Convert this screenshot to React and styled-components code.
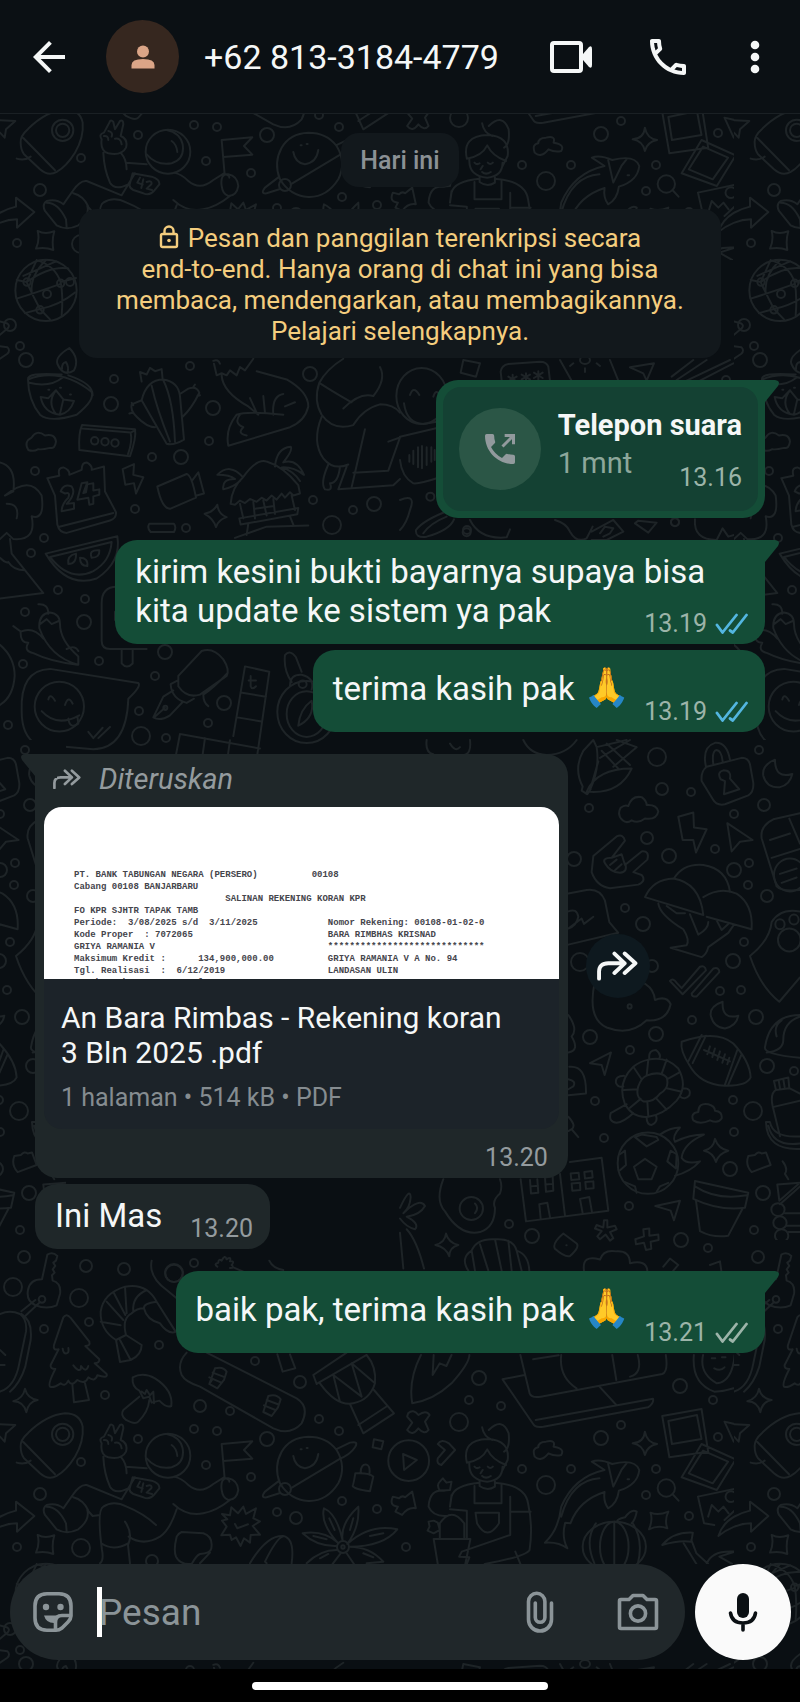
import React, { useState } from "react";
import styled, { createGlobalStyle } from "styled-components";
import { MdArrowBack, MdOutlineCall } from "react-icons/md";

const GlobalStyle = createGlobalStyle`
  * {
    box-sizing: border-box;
  }

  body {
    margin: 0;
    background: #000;
    color: #f5f7f7;
    font-family: Roboto, "Noto Sans", sans-serif;
  }

  button,
  input {
    font: inherit;
    color: inherit;
    background: none;
    border: none;
    padding: 0;
  }
`;

const Screen = styled.div`
  position: relative;
  display: flex;
  flex-direction: column;
  min-height: 100vh;
  overflow: hidden;
  background: #0a0f13;
`;

const WallpaperSvg = styled.svg`
  position: absolute;
  top: 0;
  left: 0;
  width: 100%;
  height: 100%;
  fill: none;
  stroke: #1e2427;
  stroke-width: 2;
  stroke-linecap: round;
  stroke-linejoin: round;

  path,
  ellipse {
    vector-effect: non-scaling-stroke;
  }
`;

const Header = styled.header`
  position: relative;
  display: flex;
  align-items: center;
  height: 114px;
  padding: 0 31px 0 25px;
  background: #0b1014;
  border-bottom: 1px solid #1a2024;
`;

const IconButton = styled.button`
  display: flex;
  align-items: center;
  justify-content: center;
  flex: none;
  width: ${(props) => (props.$narrow ? "28px" : "48px")};
  height: 48px;
  cursor: pointer;
`;

const Avatar = styled.span`
  display: flex;
  align-items: center;
  justify-content: center;
  flex: none;
  width: 73px;
  height: 73px;
  margin-left: 33px;
  border-radius: 50%;
  background: #36271f;
`;

const ContactName = styled.h1`
  flex: 1;
  margin: 0 0 0 25px;
  font-size: 34px;
  font-weight: 400;
  white-space: nowrap;
`;

const HeaderActions = styled.div`
  display: flex;
  gap: 49px;
`;

const Chat = styled.main`
  position: relative;
  flex: 1;
  display: flex;
  flex-direction: column;
  padding: 19px 35px;
`;

const DateChip = styled.time`
  align-self: center;
  padding: 14px 19px 12px;
  border-radius: 18px;
  background: #12181c;
  color: #8b9195;
  font-size: 25px;
  font-weight: 500;
  line-height: 28px;
`;

const Notice = styled.p`
  align-self: center;
  width: 88%;
  margin: 22px 0 0;
  padding: 14px 32px 11px;
  border-radius: 18px;
  background: #12181c;
  color: #f4cd7e;
  font-size: 26px;
  line-height: 31px;
  text-align: center;

  svg {
    margin-right: 9px;
    vertical-align: -2px;
  }

  a {
    color: inherit;
    text-decoration: none;
  }
`;

const NoBreak = styled.span`
  white-space: nowrap;
`;

const Row = styled.div`
  display: flex;
  align-items: center;
  gap: 18px;
  justify-content: ${(props) => (props.$sent ? "flex-end" : "flex-start")};
  margin-top: ${(props) => (props.$grouped ? "6px" : "22px")};
`;

const Bubble = styled.article`
  position: relative;
  max-width: 89%;
  border-radius: 22px;
  background: ${(props) => (props.$sent ? "#144d37" : "#1f2729")};

  &::before {
    content: "";
    display: ${(props) => (props.$tail ? "block" : "none")};
    position: absolute;
    top: 0;
    ${(props) => (props.$sent ? "right: -15px;" : "left: -15px; transform: scaleX(-1);")}
    width: 37px;
    height: 24px;
    background: inherit;
    clip-path: path("M0 0 H32 Q38 1 35 6 L22 22 V24 H0 Z");
  }
`;

const TextBubble = styled(Bubble)`
  padding: 12px 17px 6px 20px;
  font-size: 33px;
  line-height: 39px;
`;

const Emoji = styled.span`
  display: inline-block;
  height: 56px;
  font-family: "Noto Color Emoji", sans-serif;
  font-size: 38px;
  line-height: 50px;
`;

const Meta = styled.span`
  position: relative;
  display: flex;
  align-items: center;
  gap: 8px;
  color: ${(props) => (props.$sent ? "#9cb4a9" : "#949b9e")};
  font-size: 25px;
  line-height: 28px;
`;

const FloatMeta = styled(Meta)`
  float: right;
  margin: ${(props) => (props.$tall ? "36px 0 0 14px" : "19px 0 0 28px")};
`;

const CallBubble = styled(Bubble)`
  padding: 7px;
`;

const CallCard = styled.div`
  position: relative;
  display: flex;
  align-items: center;
  gap: 17px;
  min-height: 124px;
  padding: 12px 16px;
  border-radius: 18px;
  background: #144133;
`;

const CallIcon = styled.span`
  display: flex;
  align-items: center;
  justify-content: center;
  width: 82px;
  height: 82px;
  border-radius: 50%;
  background: #2b5646;
`;

const CallTitle = styled.strong`
  display: block;
  font-size: 29px;
  font-weight: 700;
  line-height: 38px;
`;

const CallDetails = styled.div`
  display: flex;
  justify-content: space-between;
  align-items: flex-start;
  color: #8da79b;
  font-size: 29px;
  line-height: 38px;
`;

const CallTime = styled(Meta)`
  padding-top: 20px;
`;

const DocumentBubble = styled(Bubble)`
  width: 73%;
  padding: 9px 9px 6px;
`;

const Forwarded = styled.div`
  display: flex;
  align-items: center;
  gap: 18px;
  height: 44px;
  padding: 0 9px 12px;
  color: #949b9e;
  font-size: 29px;
  font-style: italic;
`;

const FileCard = styled.a`
  display: block;
  overflow: hidden;
  border-radius: 18px;
  background: #1c2329;
  color: #f5f7f7;
  text-decoration: none;
`;

const Statement = styled.pre`
  height: 172px;
  margin: 0;
  padding: 62px 0 0 30px;
  overflow: hidden;
  background: #fff;
  color: #45454c;
  font-family: "Liberation Mono", monospace;
  font-size: 9px;
  font-weight: 700;
  line-height: 12px;
`;

const FileInfo = styled.div`
  padding: 21px 40px 14px 17px;
  font-size: 30px;
  line-height: 35px;
`;

const FileMeta = styled.div`
  margin-top: 10px;
  color: #858c90;
  font-size: 25px;
`;

const DocumentTime = styled(Meta)`
  justify-content: flex-end;
  padding: 15px 11px 0;
`;

const ForwardButton = styled(IconButton)`
  width: 64px;
  height: 64px;
  border-radius: 50%;
  background: #0e191f;
`;

const Composer = styled.form`
  position: relative;
  display: flex;
  align-items: center;
  gap: 10px;
  padding: 0 9px 9px 10px;
`;

const InputBar = styled.div`
  flex: 1;
  display: flex;
  align-items: center;
  min-width: 0;
  height: 96px;
  padding: 0 23px 0 19px;
  border-radius: 48px;
  background: #20272a;
  color: #8b9498;
`;

const Caret = styled.span`
  flex: none;
  width: 5px;
  height: 50px;
  margin-left: 20px;
  background: #fff;
`;

const MessageInput = styled.input`
  flex: 1;
  min-width: 0;
  margin-left: -3px;
  font-size: 37px;
  outline: none;

  &::placeholder {
    color: #8b9498;
    opacity: 1;
  }
`;

const BarActions = styled.div`
  display: flex;
  gap: 50px;
`;

const MicButton = styled(IconButton)`
  width: 96px;
  height: 96px;
  border-radius: 50%;
  background: #fafafa;
  color: #0b1014;
`;

const NavBar = styled.footer`
  position: relative;
  display: flex;
  justify-content: center;
  align-items: center;
  height: 33px;
  background: #000;
`;

const NavHandle = styled.span`
  width: 37%;
  height: 8px;
  border-radius: 4px;
  background: #fff;
`;

function VideoIcon() {
  return (
    <svg width="44" height="36" viewBox="0 0 44 36" fill="none" aria-hidden="true">
      <rect x="3" y="4" width="29" height="28" rx="2" stroke="currentColor" strokeWidth="4" />
      <path d="M34 15 L40 8 Q43 6 43 10 V26 Q43 30 40 28 L34 21Z" fill="currentColor" />
    </svg>
  );
}

function MoreIcon() {
  return (
    <svg width="10" height="34" viewBox="0 0 10 34" fill="currentColor" aria-hidden="true">
      <circle cx="5" cy="5" r="4.3" />
      <circle cx="5" cy="17" r="4.3" />
      <circle cx="5" cy="29" r="4.3" />
    </svg>
  );
}

function PersonIcon() {
  return (
    <svg width="24" height="24" viewBox="0 0 24 24" fill="#dba587" aria-hidden="true">
      <circle cx="12" cy="6.5" r="6" />
      <path d="M.5 23.5V20Q.5 14 12 14T23.500 20V23.500Z" />
    </svg>
  );
}

function LockIcon() {
  return (
    <svg width="20" height="24" viewBox="0 0 20 24" fill="none" stroke="currentColor" strokeWidth="2.400" aria-hidden="true">
      <rect x="2" y="9" width="16" height="13" rx="1.500" />
      <path d="M5.500 9V6a4.500 4.500 0 0 1 9 0v3" />
      <circle cx="10" cy="15.500" r="1.800" fill="currentColor" stroke="none" />
    </svg>
  );
}

function OutgoingCallIcon() {
  return (
    <svg width="40" height="40" viewBox="0 0 24 24" fill="#929a9d" aria-hidden="true">
      <path d="M20 15.500c-1.250 0-2.450-.2-3.570-.57a1 1 0 0 0-1.020.24l-2.200 2.200a15.050 15.050 0 0 1-6.590-6.580l2.200-2.210c.28-.27.36-.66.25-1.010A11.360 11.360 0 0 1 8.500 4a1 1 0 0 0-1-1H4a1 1 0 0 0-1 1c0 9.390 7.610 17 17 17a1 1 0 0 0 1-1v-3.500a1 1 0 0 0-1-1z" />
      <path d="M13.500 10.500 20 4M14.800 3.900H20.100V9.200" fill="none" stroke="#929a9d" strokeWidth="1.800" />
    </svg>
  );
}

function Ticks({ read }) {
  return (
    <svg width="33" height="24" viewBox="0 0 33 24" fill="none" stroke={read ? "#53b6e0" : "#9cb4a9"} strokeWidth="2.800" strokeLinecap="round" strokeLinejoin="round" role="img" aria-label={read ? "Dibaca" : "Terkirim"}>
      <path d="M2 13 7.500 20.500 21.500 3M15 18.500 17.800 20.500 31.500 3" />
    </svg>
  );
}

function ForwardIcon({ width }) {
  return (
    <svg width={width} viewBox="0 0 40 29" fill="none" stroke="currentColor" strokeWidth="3.800" strokeLinecap="round" strokeLinejoin="round" aria-hidden="true">
      <path d="M2 27V20Q2 12 11 12H27M17 2.500 27 12 17 21.500M27 2.500 37.500 12 27 21.500" />
    </svg>
  );
}

function StickerIcon() {
  return (
    <svg width="42" height="42" viewBox="0 0 42 42" fill="none" stroke="currentColor" strokeWidth="3.600" strokeLinejoin="round" aria-hidden="true">
      <path d="M15 2.800H27Q39 3 39 15V25Q39 28 36 31L30 37Q27 39.200 24 39.200H15Q3 39 3 27V15Q3 3 15 2.800Z" />
      <path d="M38 24.500H30Q23.500 24.500 23.500 31V38" />
      <circle cx="14" cy="16" r="3.200" fill="currentColor" stroke="none" />
      <circle cx="28.500" cy="16" r="3.200" fill="currentColor" stroke="none" />
      <path d="M12 24.500H27Q22 27 22 32Q14 32 12 24.500Z" fill="currentColor" stroke="none" />
    </svg>
  );
}

function ClipIcon() {
  return (
    <svg width="28" height="42" viewBox="0 0 28 42" fill="none" stroke="currentColor" strokeWidth="3.600" strokeLinecap="round" aria-hidden="true">
      <path d="M25.500 12V28.500A11.500 11.500 0 0 1 2.500 28.500V10.500A8.200 8.200 0 0 1 18.900 10.500V26.500A4.800 4.800 0 0 1 9.300 26.500V12" />
    </svg>
  );
}

function CameraIcon() {
  return (
    <svg width="42" height="38" viewBox="0 0 42 38" fill="none" stroke="currentColor" strokeWidth="3.600" strokeLinejoin="round" aria-hidden="true">
      <path d="M4 6.500H12L16 2.500H26L30 6.500H38Q39.500 6.500 39.500 8V34Q39.500 35.500 38 35.500H4Q2.500 35.500 2.500 34V8Q2.500 6.500 4 6.500Z" />
      <circle cx="21" cy="20.500" r="7.600" />
    </svg>
  );
}

function MicIcon() {
  return (
    <svg width="30" height="42" viewBox="0 0 30 42" aria-hidden="true">
      <rect x="9" y="2" width="12" height="25" rx="6" fill="currentColor" />
      <path d="M2.500 22Q4 32 15 32T27.500 22M15 32V39" fill="none" stroke="currentColor" strokeWidth="3.600" strokeLinecap="round" />
    </svg>
  );
}

// x, y, r of the small rings scattered between the doodles
const rings = [
  [24, 1257, 6], [13, 1287, 9], [86, 1266, 6], [124, 1269, 6], [79, 1298, 9], [194, 1263, 4],
  [174, 1273, 9], [44, 1329, 4], [89, 1322, 4], [105, 1395, 4], [159, 1345, 4], [200, 1406, 6],
  [230, 1411, 4], [255, 1361, 4], [300, 1382, 6], [319, 1419, 4], [339, 1431, 4], [194, 1429, 4],
  [217, 1431, 4], [138, 1439, 4], [267, 1439, 7], [206, 1465, 4], [251, 1477, 4], [81, 1462, 4],
  [40, 1494, 6], [81, 1548, 9], [17, 1547, 4], [342, 1501, 4], [277, 1512, 4], [296, 1518, 6],
  [377, 1509, 4], [152, 1561, 6], [459, 1422, 9], [479, 1378, 7], [469, 1400, 4],
  [501, 1406, 4], [522, 1469, 4], [546, 1485, 9], [571, 1469, 4], [601, 1438, 7], [621, 1425, 4],
  [680, 1386, 7], [713, 1400, 4], [718, 1437, 4], [656, 1469, 4], [646, 1495, 4], [689, 1516, 4],
  [406, 1547, 4], [47, 294, 4], [70, 282, 4], [26, 360, 7],
  [10, 325, 6], [20, 346, 4], [114, 379, 4], [111, 404, 7], [213, 408, 7],
  [190, 366, 4], [209, 441, 4], [152, 457, 4], [181, 457, 7], [35, 471, 4], [135, 509, 4],
  [313, 500, 4], [353, 510, 4], [374, 504, 7], [332, 525, 9], [186, 528, 4], [44, 538, 4],
  [31, 553, 4], [58, 590, 4], [85, 599, 4], [25, 612, 4], [84, 622, 7], [23, 664, 4],
  [99, 661, 4], [165, 652, 7], [155, 676, 4], [224, 703, 7], [139, 711, 4], [141, 736, 9],
  [208, 723, 4], [166, 738, 4], [8, 725, 4], [310, 374, 7], [467, 530, 4], [675, 522, 4],
  [726, 380, 4], [657, 757, 9], [662, 789, 6], [691, 792, 4],
  [759, 750, 4], [764, 805, 6], [589, 808, 4], [734, 814, 4], [647, 838, 6], [574, 859, 7],
  [669, 856, 7], [715, 849, 4], [734, 870, 7], [749, 863, 4], [748, 885, 4], [767, 896, 6],
  [625, 908, 4], [643, 924, 7], [744, 942, 4], [733, 961, 7], [580, 962, 9], [652, 966, 6],
  [720, 991, 4], [741, 990, 4], [756, 1017, 7], [692, 1020, 4], [590, 1037, 7], [656, 1034, 7],
  [630, 1050, 4], [767, 1066, 7], [794, 1071, 4], [733, 1100, 4], [753, 1111, 9], [595, 1101, 4],
  [734, 1132, 4], [604, 1138, 4], [730, 1169, 7], [763, 1193, 7], [629, 1206, 4], [509, 1224, 4],
  [532, 1236, 7], [754, 1230, 4], [681, 1240, 7], [708, 1248, 4],
];

// The doodles of one tile. Each group keeps the scale it was drawn in.
function Doodles() {
  return (
    <g id="doodles" clipPath="url(#tile)">
      {rings.map(([x, y, r]) => (
        <ellipse key={`${x}-${y}`} cx={x} cy={y} rx={r} ry={r} />
      ))}

      <g transform="translate(0 1240) scale(.3333)">
        {/* rocket */}
        <path d="M62 620Q60 600 85 578Q140 525 195 520Q240 520 248 560Q252 605 225 650Q200 690 170 708Q145 722 120 700L72 655Q62 640 62 620ZM70 606 165 703M92 662Q75 675 50 668 58 698Q42 712 46 732 58 718 68 722 78 735 88 730 82 720 108 710 114 702 106 694M80 670Q92 680 74 694 66 706 72 714" />
        <ellipse cx="188" cy="583" rx="32" ry="32" />
        <ellipse cx="188" cy="583" rx="20" ry="20" />
        {/* key */}
        <path d="M142 44Q158 34 172 48L168 62 160 68 166 78 158 88 164 98 156 106 158 122Q185 130 180 162L170 196Q140 210 105 195 78 182 84 150 90 118 126 118ZM118 188 78 226M106 180 64 214M0 222Q30 208 60 222 82 238 78 275L58 370Q45 440 0 455M64 222Q98 240 92 300L76 380Q60 430 30 455M0 330 16 345M0 375H14" />
        <ellipse cx="126" cy="178" rx="10" ry="10" />
        {/* pine */}
        <path d="M190 232Q200 218 212 234L268 305Q272 318 256 318L298 358Q300 368 284 370L320 402Q325 416 292 406 285 428 265 412 255 435 232 420 215 442 205 422 195 442 182 430 160 445 150 440 143 432 166 387 150 387 152 375L176 328Q158 332 162 315ZM217 432 222 487 267 480 255 430M188 326Q190 342 200 340 208 338 205 324M220 376Q235 396 242 388L243 378Q258 400 265 378" />
        {/* shrimp */}
        <path d="M528 275Q505 285 480 250 440 240 432 205 410 205 395 220 365 235 378 285L425 315Q425 345 392 360L360 366 348 300Q300 270 302 215 310 160 375 140 440 128 470 185L525 272ZM302 245 362 256M320 185 370 240M342 160 376 225M375 140 380 220M440 150Q395 170 400 215M470 185Q430 190 432 205M348 300 378 285M360 300 392 360" />
        {/* mushroom */}
        <path d="M398 412Q430 395 465 415 520 450 514 498 500 505 478 482L455 488 448 470 430 475 418 452Q395 440 398 412ZM418 470 370 510Q360 525 378 540 405 555 415 545 445 515 448 480M425 455 435 462 440 450 450 466 460 455 462 490" />
        {/* stars */}
        <path d="M75 446Q82 475 113 480 85 485 79 517 72 485 40 484 70 475 75 446ZM113 885Q135 897 163 886 155 912 160 942 135 932 108 938 120 912 113 885ZM0 553 46 555 18 580 14 605 0 590M808 62Q818 85 850 90" />
        {/* snowboard */}
        <path d="M560 338Q530 370 545 405 555 425 600 440L820 565Q870 588 905 550 930 500 890 475L620 338M645 385Q670 378 680 395L672 420 652 445 628 432ZM638 398 670 410M628 412 664 428M628 432 636 420M805 468Q830 460 842 478L834 502 815 528 790 516ZM800 480 832 492M792 496 826 510" />
        {/* drum */}
        <path d="M940 405 1040 338M950 432 1100 345M940 405 950 432M960 430Q1010 500 1060 490 1110 480 1125 430 1130 380 1100 345M1000 405 1020 485M1000 405 1085 470M1055 370 1085 470M1055 370 1125 430M1050 492 1090 580 1182 520 1122 450M1075 555 1162 498M832 343 848 395 886 385 870 343" />
        {/* astronaut */}
        <ellipse cx="504" cy="647" rx="67" ry="66" />
        <path d="M440 655Q470 690 515 682 555 670 548 625 540 590 500 582M515 615Q530 625 532 648M305 610Q295 595 312 590L328 560Q332 548 340 558L345 580 360 555Q370 550 370 565L362 600Q385 610 378 635 365 660 325 652 300 645 305 610ZM312 600Q325 598 325 612M325 585Q340 588 335 602M345 608Q362 605 365 625M310 650Q312 700 330 740 345 765 385 745M362 650Q380 670 380 700L378 680 440 685M522 710Q545 715 565 735 600 765 640 732L672 712M520 792Q560 830 610 820 650 812 690 780M365 778 260 735Q240 732 218 765L190 805Q170 788 140 795 125 805 135 825L170 868Q200 885 235 868 270 840 262 810L278 828 300 825M365 778 405 712M140 800Q175 800 198 850L200 875M220 772Q250 780 264 810M300 970Q312 960 306 930 290 810 310 800 340 780 380 800 430 820 468 855M375 845Q400 880 384 915L390 970M304 910Q340 935 384 910M386 890Q430 920 480 890 510 870 530 808M398 712 455 722Q480 730 478 745L462 765Q450 780 430 772L400 762Q385 755 390 742ZM420 725 412 740 428 746M430 730 424 756M440 738Q458 732 454 745L440 758 456 762M665 612 757 604 732 630 757 656 670 663M665 612 674 715M665 750Q660 712 685 715 712 720 715 750 710 780 685 780 668 775 665 750ZM672 712Q690 720 688 725" />
        {/* planet */}
        <path d="M925 590Q980 590 1010 630 1040 680 1015 730 980 785 925 783 870 780 840 730 820 680 845 635 870 592 925 590ZM872 745 1022 655M1008 628 1050 608Q1078 602 1065 622 1050 645 1018 657M838 722 795 755Q780 775 800 772L838 760M880 648Q885 680 915 685 950 680 955 642M902 628H905M920 624H923" />
        <ellipse cx="855" cy="747" rx="18" ry="18" />
        {/* badge, padlock, cube */}
        <path d="M666 822 690 826 694 802 714 820 730 800 738 822 768 805 760 835 780 844 758 858 780 884 752 885 750 908 732 895 722 918 708 892 695 900 690 884 664 886 680 860 666 842 682 838ZM705 852 712 865 744 853M1066 700Q1060 738 1058 738 1062 748 1110 754L1120 710Q1110 698 1066 700ZM1082 698Q1082 672 1100 674 1112 678 1108 704M1122 598 1150 604 1144 628 1118 622Z" />
        {/* bread, racket, flower */}
        <path d="M545 876 610 880Q640 890 634 925 632 940 600 942 590 945 575 972 540 975 528 950 520 930 530 890 535 880 545 876ZM630 938 600 970M750 970Q800 885 850 888 885 895 875 970M795 965Q830 895 848 890M795 965 800 970M1015 910Q960 850 972 805 1010 820 1028 902Q1020 850 1075 800 1080 860 1042 912Q1110 850 1192 868 1150 920 1048 920Q1110 920 1150 965L1100 970M1010 918Q950 920 908 880 970 870 1014 908M1010 930Q960 930 920 970M1022 940 998 972M1040 940 1062 972M988 835 1004 870M1060 835 1050 870M940 888 980 898M1110 888 1150 880M1090 940 1120 952M960 955 985 942" />
        <ellipse cx="1029" cy="921" rx="18" ry="18" />
        <ellipse cx="1029" cy="921" rx="5" ry="5" />
        {/* dandelion */}
        <path d="M652 80Q640 72 655 68 655 55 665 62 675 42 680 58 695 48 690 64 706 62 695 75 705 85 690 84M455 62Q445 110 500 150L530 175M700 82 730 95" />
        <ellipse cx="522" cy="100" rx="26" ry="26" />
      </g>

      <g transform="translate(0 1240) scale(.5102 .3333)">
        {/* play badge and small shapes */}
        <ellipse cx="801" cy="662" rx="40" ry="61" />
        <path d="M790 642 817 660 792 690ZM800 520Q810 505 820 525 835 508 842 525L833 545 840 570Q832 586 820 565 808 590 798 570L808 548 798 530ZM858 612Q865 595 880 610L892 630 865 675Q855 672 858 655L872 630ZM770 770 782 775Q788 765 794 772L808 755 815 805Q800 800 788 825L775 815 780 800Q762 798 770 770Z" />
        {/* leaf, laptop, cameo */}
        <path d="M825 345Q800 420 808 490 850 480 885 430 920 370 920 345M850 345 848 405 862 370 875 378 885 345M1020 345 1038 460Q1042 475 1060 470L1298 402Q1310 395 1305 345M1028 405 985 418 1045 552Q1048 564 1065 560L1270 502Q1282 490 1280 476L1050 540M1175 440 1208 495M1100 345Q1095 410 1130 445M1200 345 1208 420M1250 345Q1260 400 1235 410M1045 358 1095 346M1360 345Q1355 430 1400 455 1470 450 1488 370L1490 345M1378 345Q1370 400 1405 430 1435 425 1440 345M1395 355H1402M1415 352H1422M1400 385Q1412 395 1420 382" />
        {/* gardener */}
        <path d="M915 668Q905 600 955 597 1000 600 995 660L985 690M915 668Q945 660 955 628 965 660 992 675M920 670Q918 720 955 725 985 720 985 680M945 562Q948 590 965 600M958 570Q985 530 997 580 1000 625 988 635M930 680Q935 688 940 682M956 680Q961 688 966 680M946 690 942 700M945 708Q952 718 962 708M940 722V738Q955 755 970 740V722M940 728Q890 735 885 770L882 800M970 728Q1030 735 1035 790 1045 860 1038 930 1030 950 950 972M930 738V790H983V735M932 818H978V850Q955 905 935 850ZM882 808 915 812V895M1000 770V885L905 935 900 950 920 952 915 972M1000 815H1040M1010 935 1020 972M850 897H922L912 972M850 897 858 972M862 897V850Q885 798 910 850V897M872 752Q842 745 840 800 848 830 875 828M882 800 885 765M862 752Q855 735 862 725L868 715 875 728 885 725 882 750ZM840 845 850 842 858 848 862 870 850 880 838 872 842 860Z" />
        {/* cloud, sparkles */}
        <path d="M1070 605Q1090 598 1085 620 1108 625 1100 645 1088 650 1075 640 1060 668 1048 650 1042 625 1055 622 1055 605 1070 605ZM1264 575Q1268 608 1288 612 1268 618 1264 645 1260 615 1240 610 1262 608 1264 575ZM1275 818Q1290 828 1310 815 1302 840 1308 865 1290 855 1272 868 1280 840 1275 818ZM1420 545 1468 562 1450 570 1438 605Z" />
        {/* whale */}
        <path d="M1068 908Q1095 870 1100 800 1125 710 1185 690L1160 665Q1175 655 1200 672 1245 655 1253 690 1250 735 1213 752 1210 790 1192 805 1182 785 1185 756 1135 780 1118 850L1108 848Q1100 890 1112 925 1095 905 1068 908ZM1100 830Q1120 720 1175 715M1192 672 1202 740 1218 690 1228 670M1230 718H1233" />
        {/* pumpkin */}
        <ellipse cx="1204" cy="920" rx="62" ry="75" />
        <ellipse cx="1204" cy="920" rx="28" ry="75" />
        <path d="M1204 845V972M1210 845Q1208 838 1225 832 1238 805 1248 815 1245 840 1238 850M1168 850Q1145 900 1165 970M1240 850Q1262 900 1250 972" />
        {/* photos */}
        <path d="M1298 528 1375 507 1388 635 1312 652ZM1310 543 1366 525 1375 597 1317 612ZM1375 612 1442 658 1405 750 1336 712ZM1378 632 1427 665 1397 730 1350 700ZM1368 770 1445 745 1455 790 1420 840M1368 770 1380 850 1400 855M1388 830 1395 795 1408 815 1418 800 1428 820M1408 888Q1420 830 1470 812V785L1506 828 1472 875V850Q1440 850 1408 888Z" />
        <ellipse cx="1433" cy="770" rx="11" ry="16" />
        <ellipse cx="1306" cy="744" rx="17" ry="26" />
        <path d="M1318 762 1330 782" />
        {/* palm */}
        <path d="M1298 915Q1320 875 1358 878L1355 905Q1330 900 1298 915ZM1355 900 1365 940 1388 972M1340 910 1365 972M1385 972Q1395 930 1440 935L1410 950 1435 972" />
      </g>

      <g transform="translate(-734 1240) scale(.5102 .3333)">
        {/* arrow running over the tile edge */}
        <path d="M1408 888Q1420 830 1470 812V785L1506 828 1472 875V850Q1440 850 1408 888Z" />
      </g>

      <g transform="translate(0 110) scale(.3333 .4146)">
        {/* globe */}
        <ellipse cx="138" cy="435" rx="92" ry="74" />
        <path d="M50 455Q110 440 180 420M80 415Q150 375 205 382M110 362 80 415Q100 450 120 480L150 505M110 362Q165 375 182 415L228 405M182 415Q190 450 185 495M120 480Q180 470 225 440M120 480 75 490M80 415 50 410M138 362Q90 400 95 440M168 365 70 400" />
        <ellipse cx="81" cy="415" rx="11" ry="9" />
        <ellipse cx="182" cy="418" rx="11" ry="9" />
        <ellipse cx="120" cy="482" rx="11" ry="9" />
        {/* flute */}
        <path d="M0 510 22 515Q30 520 24 526L0 542M0 570 22 572Q32 580 22 588L0 600" />
        {/* oil lamp */}
        <path d="M84 650Q180 620 275 680 285 700 230 735 150 755 120 735 85 700 84 650ZM84 650Q80 632 185 638M205 640Q280 660 278 688M172 612Q165 595 208 574 240 600 222 628 190 645 172 612ZM186 625Q185 610 198 608 208 620 202 635M88 658Q150 670 188 645M122 692 145 695 168 676 190 698 222 702Q210 730 180 735 130 730 122 692ZM168 676Q140 705 168 733M190 698Q185 715 180 733M145 675H148M180 670H183M210 686H213" />
        {/* cactus */}
        <path d="M425 700Q440 650 490 650 535 655 540 690L552 795Q520 810 500 805L425 700ZM455 665Q470 720 510 800M490 652Q520 700 525 800M540 685 565 672Q590 665 598 682 575 720 548 740M425 700 395 710Q390 725 410 740 440 765 465 765M425 655 420 632 440 638 450 622 465 630 485 625 488 650M580 668 585 662M592 690 600 688M400 712 395 706M398 730 388 732" />
        {/* cloud and block */}
        <path d="M85 820Q70 800 95 790 110 770 135 785 165 780 168 800 165 818 150 815 125 820 115 818 100 825 85 820ZM246 760 405 770Q410 790 390 835L238 820Q235 780 246 760ZM246 768 392 778Q398 800 384 830M392 778 406 772" />
        <ellipse cx="284" cy="798" rx="11" ry="9" />
        <ellipse cx="315" cy="800" rx="11" ry="9" />
        <ellipse cx="345" cy="803" rx="11" ry="9" />
        {/* calendar */}
        <path d="M142 888 178 882Q172 862 190 862 210 868 208 880L245 868Q245 850 260 850 278 858 275 868L312 860 315 920 348 970Q350 985 330 990L200 1020Q178 1020 172 1000L165 930 142 888ZM178 1005 340 972M182 920Q190 900 215 908 230 925 200 950L222 948 222 962 185 968Q185 950 205 935 212 920 195 925ZM245 900 232 940 265 935 268 952 280 950 280 932 298 928V915L280 918V900L262 903 258 922 250 924 262 898Z" />
        {/* bolt and camcorder */}
        <path d="M368 866 402 854 400 880 430 886 408 925 402 900 376 904ZM472 908 560 878Q575 880 588 935L510 962Q485 960 472 908ZM575 895 595 874 612 925 590 930M448 998H522Q530 1006 522 1018H452Q440 1008 448 998ZM614 974Q640 970 652 952 655 975 680 982 655 988 648 1006 640 985 614 974Z" />
        {/* beach hut */}
        <path d="M692 950Q695 910 730 885 770 840 800 848 850 860 895 905L900 925 880 930 870 922 855 935 845 925 830 940 815 930 800 942 785 935 770 945 750 938 735 948 720 942 705 952ZM720 950 730 985M875 930 885 965M718 985 895 960 892 975 722 1000ZM745 998 740 1025M870 980 880 1000M760 945 765 985M790 942 800 978M820 938 825 974M765 962 822 955M728 885Q690 850 652 880 690 880 705 890 665 890 670 915 700 910 720 895M825 860Q830 815 872 812 880 820 850 850 890 840 912 880 880 860 845 862 880 870 900 895M705 1032 800 1005 925 1002" />
        {/* lion */}
        <path d="M642 612 650 640 665 635 680 640 690 628 710 640 720 620 735 628 760 600M640 605Q655 600 660 612M665 640Q668 680 745 715L775 735M770 630 860 650Q925 680 925 715 915 750 870 765L685 810Q675 770 710 735 740 725 850 735M720 735Q700 755 730 765 710 780 740 785M750 695 770 730M790 690 795 730M820 735Q815 690 850 685M855 715 885 705" />
        {/* elephant */}
        <path d="M958 658Q980 625 1030 600M958 658Q1000 680 1055 705M958 658Q940 700 965 735 1000 775 1060 760 1090 720 1140 710 1180 710 1200 730M965 740Q935 800 970 840 1000 870 1045 855M1030 720Q1080 680 1120 690 1160 650 1140 620M985 855Q960 900 975 915 1000 920 990 900 1015 900 1020 860M1095 770 1055 910M1040 860 1015 915 1180 905 1200 890M1060 875 1165 870 1200 790 1165 800" />
        {/* watermelon */}
        <path d="M137 1070 352 1028Q365 1090 290 1130 200 1155 137 1070ZM150 1078 335 1042Q330 1090 280 1112 210 1140 150 1078M205 1095Q200 1075 228 1070 230 1095 205 1095ZM240 1080Q265 1080 262 1100 240 1100 240 1080ZM275 1080Q265 1060 298 1062 300 1080 275 1080Z" />
        {/* tent, ice pop, chili */}
        <path d="M0 850Q50 860 40 920L15 930Q90 880 125 930 135 990 95 980 110 1040 40 1035L20 1020 0 1035M20 950Q60 950 50 985M30 1035 35 1070 130 1165 0 1178M0 1080Q20 1095 25 1090 40 1110 75 1110M350 1150Q305 1150 305 1190V1280Q305 1300 330 1300H440M365 1302V1335Q380 1350 398 1335V1302M345 1210V1230M115 1192Q145 1190 145 1215M118 1250Q115 1215 150 1212 180 1215 180 1240 180 1280 235 1318V1338Q150 1320 118 1250ZM120 1240 140 1228 155 1240 178 1232M40 1245 62 1258Q60 1285 85 1285 70 1305 100 1310 150 1330 232 1338M62 1258Q100 1245 130 1275M200 1300Q225 1290 235 1305M0 1290Q44 1320 44 1365 40 1415 0 1435" />
        {/* chat bubble face */}
        <path d="M65 1450Q60 1350 150 1348L415 1382Q425 1390 385 1420 380 1540 280 1542L110 1530Q65 1510 65 1450ZM145 1422Q150 1405 165 1425M195 1435Q205 1410 218 1432M125 1450Q170 1490 238 1460M205 1468Q210 1495 235 1480L232 1462M265 1500 280 1515 308 1490M295 1515 330 1488" />
        <ellipse cx="178" cy="1439" rx="74" ry="60" />
        {/* pen */}
        <path d="M535 1365 605 1305Q640 1295 670 1325 690 1350 680 1365L600 1410Q560 1420 535 1390ZM535 1375 512 1385Q515 1420 560 1430L582 1420M520 1400 490 1415 460 1465Q480 1475 510 1460L548 1428M462 1465 495 1442M680 1360Q640 1395 610 1410 610 1430 625 1438" />
        <ellipse cx="496" cy="1442" rx="6" ry="5" />
        {/* crossword and stopwatch */}
        <path d="M735 1342 808 1355 772 1555M735 1342 700 1510M722 1405 798 1415M712 1465 785 1475M752 1365V1390Q756 1400 768 1390M746 1376H768M540 1505 780 1540M540 1505 528 1555M615 1515 608 1555M690 1520 684 1555M875 1380Q850 1350 855 1315 870 1300 888 1320L905 1355M870 1390Q870 1360 905 1362 945 1370 935 1398M895 1485Q900 1445 935 1425 945 1465 895 1485Z" />
        <ellipse cx="908" cy="1385" rx="12" ry="9" />
        <ellipse cx="920" cy="1452" rx="88" ry="75" />
        <ellipse cx="920" cy="1457" rx="60" ry="55" />
      </g>

      <g transform="translate(400 360) scale(.3333)">
        {/* smiling cloud, calendar, sun */}
        <ellipse cx="65" cy="108" rx="76" ry="84" />
        <path d="M30 105Q40 75 58 105M100 110Q108 85 120 105M12 130Q20 190 70 192L110 185M190 0 240 10 228 50 182 38ZM305 62 302 35Q305 15 325 12L420 5Q440 5 445 20L450 62M325 50 350 64M325 64 350 50M338 44V68M365 44 390 58M365 58 390 44M378 40V64M402 38 428 54M402 54 428 38M415 34V60M480 0 515 62M630 0 655 62M555 25V36M520 10 510 18M590 10 600 18" />
        <ellipse cx="555" cy="0" rx="15" ry="12" />
        <ellipse cx="200" cy="517" rx="12" ry="12" />
        <ellipse cx="91" cy="410" rx="12" ry="12" />
        <ellipse cx="825" cy="487" rx="12" ry="12" />
        {/* paper plane, guitar neck */}
        <path d="M690 22 762 10 740 62 730 40ZM815 50 880 0M830 60 920 0M860 62 990 0M900 62 1000 10" />
        {/* audio bubble, peas */}
        <path d="M0 230 108 205M0 300Q5 350 40 370 60 372 110 355M28 285V305M40 272V312M54 262V322M66 258V325M80 262V315M94 262V305M104 270V300M0 420Q50 400 30 450 20 490 0 510M150 450Q70 480 48 510 45 535 80 530 150 510 162 478M70 520Q90 490 140 470M210 480Q240 540 320 532L330 508M465 480Q500 490 510 515 530 550 560 535L578 500M575 515 640 480 670 515 620 540 575 540M600 520 615 500 640 505 630 520 610 530M705 490 715 482 770 488 745 518Z" />
        {/* flower behind the call card */}
        <path d="M885 478Q880 540 950 540L968 505 985 530 1020 520 1040 540" />
      </g>

      <g transform="translate(400 740) scale(.3333 .3571)">
        {/* corn */}
        <path d="M548 130Q520 80 550 30L580 0 590 20Q600 80 570 140M595 60 570 140M590 20 680 0M560 145Q590 80 695 80 660 150 570 145ZM548 130 545 142 562 152 572 138M620 10 690 70M650 0 710 20M600 50 690 0M640 75 710 20M605 30 655 80" />
        <path d="M370 0Q390 40 440 42 500 40 530 0M80 0Q75 35 100 40M210 0Q215 40 190 42M150 10Q165 35 180 20" />
        {/* padlock */}
        <path d="M920 75 1025 50Q1045 50 1050 68L1060 120Q1062 145 1045 155L975 180Q950 185 938 165L905 115Q902 88 920 75ZM918 75Q905 20 945 8 980 5 990 55M940 68Q935 30 950 28 965 30 968 60M962 110Q950 90 970 85 995 85 990 108L1018 138 972 152 975 115Z" />
        {/* moons, cloud, bolt, cursor */}
        <path d="M1125 55Q1085 70 1090 100 1100 135 1140 132 1170 125 1177 95 1125 110 1125 55ZM668 225Q650 210 662 190 675 180 685 185 695 155 725 160 740 170 740 182 770 180 775 200 770 225 735 220 715 235 695 225 680 235 668 225ZM835 215 880 203 882 245 920 250 888 315 880 280 848 280ZM982 233 1058 280 1020 285 995 312ZM968 733Q930 745 932 770 940 805 975 808 1010 800 1015 772 965 785 968 733ZM570 905 633 875 614 938 605 910ZM766 1305 840 1290 822 1345 812 1318Z" />
        {/* rock hand, sweater, mushrooms */}
        <path d="M580 325 650 270Q670 262 675 282L635 330 665 320 675 350 725 312Q750 310 742 335L700 370 725 378Q740 395 715 405L630 415Q590 410 575 370ZM635 330Q605 330 615 345 630 370 660 372 685 370 675 345M630 350 650 335M645 365 665 348M505 430 560 420Q600 415 615 450L628 510 655 540 505 573M505 480Q530 470 535 495 530 520 505 528M505 528 545 500 552 515 580 495M735 440Q760 390 820 388 900 400 910 490L735 440ZM822 388Q850 345 910 350 980 360 990 425M910 440Q960 410 1010 430 1060 460 1055 530L920 495M775 458Q780 490 850 530 870 560 860 575L812 582 905 608Q920 600 925 580L985 540 1000 520M800 465 830 485 855 485M870 488 895 545Q925 530 925 510M950 505 965 532 985 515" />
        {/* backpack, paw */}
        <path d="M1200 205 1120 222Q1080 240 1085 275L1130 410Q1145 425 1200 420M1110 280 1170 262M1115 330 1200 305M1168 220 1200 290M1140 375 1190 360M1145 400 1190 385M1200 480Q1140 470 1115 510 1110 560 1050 605 1080 690 1138 733L1200 665" />
        <ellipse cx="1170" cy="378" rx="48" ry="46" />
        <ellipse cx="1140" cy="516" rx="14" ry="14" />
        <ellipse cx="1182" cy="503" rx="14" ry="14" />
        <ellipse cx="1168" cy="560" rx="34" ry="32" />
        {/* ticks, cup */}
        <path d="M810 675Q820 665 830 680L845 695 900 635Q915 630 918 645L848 712ZM875 710 940 640Q958 635 958 650L890 718Q875 720 875 710ZM585 675Q560 780 620 805 690 830 740 785 800 790 812 740 800 715 765 728 760 670 660 665 600 655M585 675Q650 710 740 720 770 720 750 700M608 738Q635 780 672 760M752 760 768 740Q785 735 790 745L775 765Z" />
        <ellipse cx="689" cy="746" rx="6" ry="6" />
        {/* football */}
        <path d="M845 845Q950 810 1000 850 1050 900 1052 945 1040 970 975 968 900 965 868 910 840 870 845 845ZM918 828 878 905M905 826 865 900M1025 880 985 965M1012 868 975 965M912 868 990 900M930 858 922 880M945 864 937 888M960 872 952 896M975 880 967 904M988 890 982 908" />
        {/* turtle */}
        <path d="M745 895Q800 885 835 920 865 970 830 1010 790 1050 745 1055 700 1060 675 1020 650 960 700 915 720 900 745 895ZM740 940Q780 925 800 945 810 975 780 990 760 1015 730 1012 705 1000 715 970 725 945 740 940ZM745 895 740 940M700 915 725 950M800 895 785 935M840 930 802 950M845 985 800 975M800 1035 770 1005M745 1055 742 1012M690 1030 722 1005M672 980 713 978M748 892Q745 868 768 868 785 880 778 892M672 940Q645 940 648 960 655 975 670 970M850 975Q875 975 868 995 855 1010 840 998M680 1020 632 1045Q625 1070 650 1072 670 1070 700 1045M740 1058Q740 1078 755 1078 775 1070 768 1052M508 915Q560 910 558 990L505 995M505 950Q530 955 520 970L505 978M505 770Q535 810 515 830 540 870 505 875M505 1055Q530 1080 515 1090L505 1095M515 1090 535 1112" />
        {/* taco, bottle, clouds */}
        <path d="M1200 770Q1110 770 1095 860 1090 880 1200 890M1130 830Q1120 800 1145 785M1100 875Q1150 870 1150 840 1150 790 1200 775M1122 955 1165 945 1168 975 1128 980ZM1128 980Q1110 990 1118 1025L1140 1110M1168 975 1200 990M1118 1028 1200 1010M1136 952 1140 975M1150 950 1154 972M1098 1070Q1100 1150 1200 1145M1098 1070 1110 1070Q1120 1115 1200 1110M1105 1080Q1120 1140 1200 1130M880 1065Q870 1045 895 1042 895 1015 925 1020 945 1025 945 1038 968 1040 965 1060 955 1075 930 1065 900 1078 880 1065ZM945 1117Q955 1145 985 1150 955 1158 948 1182 940 1155 912 1150 940 1145 945 1117ZM1045 1165 1065 1162Q1075 1150 1085 1158L1098 1155 1112 1190 1055 1210Q1035 1190 1045 1165Z" />
        {/* soccer ball with flames */}
        <ellipse cx="744" cy="1185" rx="91" ry="86" />
        <path d="M735 1173 770 1195 755 1230 715 1230 702 1195ZM705 1112 725 1105 770 1112 775 1120 740 1138ZM660 1160 675 1150 678 1190 660 1205M812 1150 830 1160 828 1200 802 1180ZM675 1238 705 1250 710 1268M770 1265 780 1250 805 1240M780 1105Q810 1085 840 1085 815 1110 825 1125 870 1105 912 1105 850 1130 845 1170 860 1190 900 1180 870 1210 825 1220" />
        {/* building, pot */}
        <path d="M362 1230 378 1348 625 1318 605 1170 510 1182M480 1215 495 1332M390 1232 393 1270 415 1268 412 1230M435 1225 458 1222 460 1262 438 1265ZM436 1245 458 1243M392 1250 414 1248M512 1214 536 1212 538 1230 514 1232ZM515 1242 540 1240 541 1260 517 1262ZM553 1210 576 1207 578 1225 555 1228ZM556 1238 580 1236 581 1255 558 1257ZM422 1340 418 1300 442 1296 450 1336M548 1325 540 1285 568 1280 576 1322M885 1235 1045 1268 1035 1310Q960 1320 880 1285ZM885 1250Q950 1290 1040 1275M888 1290 900 1375Q940 1395 985 1388L1028 1312" />
        {/* egg, cabin, splash */}
        <path d="M130 1230Q105 1290 135 1320 180 1390 240 1378 285 1365 285 1310 275 1290 300 1270 308 1250 300 1230M225 1298Q238 1310 225 1325M1148 1180Q1165 1200 1155 1215L1165 1230M1200 1240 1132 1245 1138 1290 1200 1240M1140 1300 1200 1250" />
        <ellipse cx="214" cy="1312" rx="35" ry="32" />
        <ellipse cx="1134" cy="1315" rx="20" ry="18" />
        <ellipse cx="1140" cy="1352" rx="20" ry="18" />
        <ellipse cx="1145" cy="1388" rx="20" ry="18" />
        <path d="M1155 1325H1200M1160 1360H1200M1165 1378H1200" />
        {/* palm, shell, asterisk, cross, dice */}
        <path d="M0 1310Q30 1250 32 1280 30 1310 10 1325 60 1280 75 1305 60 1330 20 1335 60 1355 45 1370 20 1365 0 1340M0 1380 10 1480M20 1370Q50 1400 72 1480M138 1382Q145 1408 175 1414 148 1420 148 1446 138 1420 106 1414 135 1408 138 1382ZM205 1486Q180 1450 215 1430 230 1395 285 1398 340 1395 350 1430 385 1440 388 1486M225 1486 215 1430M265 1486 240 1412M305 1486 285 1398M335 1486 325 1402M365 1486 350 1430M490 1382 530 1410Q540 1420 510 1445 495 1450 465 1425 455 1410 490 1382ZM499 1415H500M612 1345H622V1365L645 1360 650 1370 630 1378 640 1395 630 1402 617 1385 600 1398 592 1390 605 1375 585 1368 590 1358 610 1365ZM730 1370 748 1368V1388L775 1385 776 1400 752 1405 754 1425 738 1428 732 1408 708 1412 706 1398 732 1390ZM552 1486Q545 1440 600 1455 610 1425 650 1432 690 1430 690 1465 740 1455 742 1486M790 1475 810 1452 835 1470 820 1486M930 1470 960 1460 964 1486" />
      </g>
    </g>
  );
}

function Wallpaper() {
  return (
    <WallpaperSvg aria-hidden="true">
      <clipPath id="tile">
        <path d="M0 250H734V740H800V1240H734V1564H0V1240H66V740H0Z" />
      </clipPath>
      <Doodles />
      <use href="#doodles" x="734" />
      <use href="#doodles" x="-734" />
      <use href="#doodles" y="-1304" />
      <use href="#doodles" x="734" y="-1304" />
      <use href="#doodles" y="1304" />
      <use href="#doodles" x="734" y="1304" />
    </WallpaperSvg>
  );
}

const statement = `PT. BANK TABUNGAN NEGARA (PERSERO)          00108
Cabang 00108 BANJARBARU
                            SALINAN REKENING KORAN KPR
FO KPR SJHTR TAPAK TAMB
Periode:  3/08/2025 s/d  3/11/2025             Nomor Rekening: 00108-01-02-0
Kode Proper  : 7072065                         BARA RIMBHAS KRISNAD
GRIYA RAMANIA V                                *****************************
Maksimum Kredit :      134,900,000.00          GRIYA RAMANIA V A No. 94
Tgl. Realisasi  :  6/12/2019                   LANDASAN ULIN
Jangka Waktu    : 240 Bln`;

function TextMessage({ sent, tail, grouped, emoji, time, read, children }) {
  return (
    <Row $sent={sent} $grouped={grouped}>
      <TextBubble $sent={sent} $tail={tail}>
        {children}
        {emoji && <Emoji>{emoji}</Emoji>}
        <FloatMeta $sent={sent} $tall={Boolean(emoji)}>
          <time>{time}</time>
          {sent && <Ticks read={read} />}
        </FloatMeta>
      </TextBubble>
    </Row>
  );
}

export default function App() {
  const [message, setMessage] = useState("");

  return (
    <Screen>
      <GlobalStyle />
      <Wallpaper />

      <Header>
        <IconButton type="button" aria-label="Kembali">
          <MdArrowBack size={48} />
        </IconButton>
        <Avatar>
          <PersonIcon />
        </Avatar>
        <ContactName>+62 813-3184-4779</ContactName>
        <HeaderActions>
          <IconButton type="button" aria-label="Panggilan video">
            <VideoIcon />
          </IconButton>
          <IconButton type="button" aria-label="Panggilan suara">
            <MdOutlineCall size={48} />
          </IconButton>
          <IconButton type="button" aria-label="Opsi lainnya" $narrow>
            <MoreIcon />
          </IconButton>
        </HeaderActions>
      </Header>

      <Chat>
        <DateChip>Hari ini</DateChip>
        <Notice>
          <LockIcon />
          Pesan dan panggilan terenkripsi secara <NoBreak>end-to-end.</NoBreak> Hanya orang di chat
          ini yang bisa membaca, mendengarkan, atau membagikannya.{" "}
          <a href="#enkripsi">Pelajari selengkapnya.</a>
        </Notice>

        <Row $sent>
          <CallBubble $sent $tail>
            <CallCard>
              <CallIcon>
                <OutgoingCallIcon />
              </CallIcon>
              <div>
                <CallTitle>Telepon suara</CallTitle>
                <CallDetails>
                  <span>1 mnt</span>
                  <CallTime $sent>
                    <time>13.16</time>
                  </CallTime>
                </CallDetails>
              </div>
            </CallCard>
          </CallBubble>
        </Row>

        <TextMessage sent tail time="13.19" read>
          kirim kesini bukti bayarnya supaya bisa kita update ke sistem ya pak
        </TextMessage>
        <TextMessage sent grouped emoji="🙏" time="13.19" read>
          {"terima kasih pak "}
        </TextMessage>

        <Row>
          <DocumentBubble $tail>
            <Forwarded>
              <ForwardIcon width="28" />
              Diteruskan
            </Forwarded>
            <FileCard href="#rekening-koran">
              <Statement>{statement}</Statement>
              <FileInfo>
                An Bara Rimbas - Rekening koran 3 Bln 2025 .pdf
                <FileMeta>1 halaman • 514 kB • PDF</FileMeta>
              </FileInfo>
            </FileCard>
            <DocumentTime>
              <time>13.20</time>
            </DocumentTime>
          </DocumentBubble>
          <ForwardButton type="button" aria-label="Teruskan">
            <ForwardIcon width="41" />
          </ForwardButton>
        </Row>

        <TextMessage grouped time="13.20">
          Ini Mas
        </TextMessage>
        <TextMessage sent tail emoji="🙏" time="13.21">
          {"baik pak, terima kasih pak "}
        </TextMessage>
      </Chat>

      <Composer onSubmit={(event) => event.preventDefault()}>
        <InputBar>
          <IconButton type="button" aria-label="Stiker">
            <StickerIcon />
          </IconButton>
          <Caret />
          <MessageInput
            type="text"
            aria-label="Pesan"
            placeholder="Pesan"
            value={message}
            onChange={(event) => setMessage(event.target.value)}
          />
          <BarActions>
            <IconButton type="button" aria-label="Lampirkan">
              <ClipIcon />
            </IconButton>
            <IconButton type="button" aria-label="Kamera">
              <CameraIcon />
            </IconButton>
          </BarActions>
        </InputBar>
        <MicButton type="button" aria-label="Rekam pesan suara">
          <MicIcon />
        </MicButton>
      </Composer>

      <NavBar>
        <NavHandle />
      </NavBar>
    </Screen>
  );
}
